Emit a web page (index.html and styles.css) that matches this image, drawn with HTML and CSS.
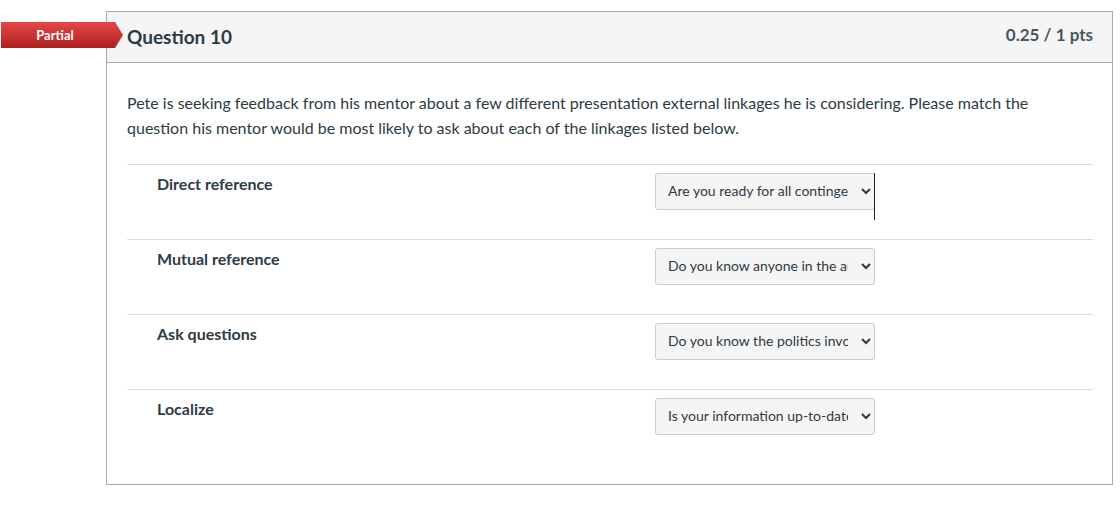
FILE: index.html
```html
<html>

<head>
    <title>Question 10</title>
    <link rel="stylesheet" href="styles.css">
</head>

<body>
    <main class="quiz">
        <div class="question">
            <div class="answer-badge">
                <span class="answer-badge-text">Partial</span>
                <svg class="answer-badge-tip" width="12" height="26" viewBox="0 0 12 26">
                    <defs>
                        <linearGradient id="tip-fill" x1="0" y1="0" x2="0" y2="1">
                            <stop offset="0" stop-color="#e34848"/>
                            <stop offset="1" stop-color="#b01f1f"/>
                        </linearGradient>
                    </defs>
                    <polygon points="0,0 4,0 12,13 4,26 0,26" fill="url(#tip-fill)"/>
                </svg>
            </div>

            <div class="question-header">
                <div class="question-title">Question 10</div>
                <div class="question-points">0.25 / 1 pts</div>
            </div>

            <div class="question-body">
                <p class="question-text">
                    Pete is seeking feedback from his mentor about a few different presentation external linkages he is considering. Please match the question his mentor would be most likely to ask about each of the linkages listed below.
                </p>

                <div class="match-row">
                    <div class="match-label">Direct reference</div>
                    <div class="match-select-wrap">
                        <select class="match-select">
                            <option>Are you ready for all contingencies?</option>
                        </select>
                        <span class="text-cursor"></span>
                    </div>
                </div>

                <div class="match-row">
                    <div class="match-label">Mutual reference</div>
                    <div class="match-select-wrap">
                        <select class="match-select">
                            <option>Do you know anyone in the audience?</option>
                        </select>
                    </div>
                </div>

                <div class="match-row">
                    <div class="match-label">Ask questions</div>
                    <div class="match-select-wrap">
                        <select class="match-select">
                            <option>Do you know the politics involved?</option>
                        </select>
                    </div>
                </div>

                <div class="match-row">
                    <div class="match-label">Localize</div>
                    <div class="match-select-wrap">
                        <select class="match-select">
                            <option>Is your information up-to-date?</option>
                        </select>
                    </div>
                </div>
            </div>
        </div>
    </main>
</body>

</html>
```

FILE: styles.css
```css
* {
    font-family: Lato, "Open Sans", sans-serif;
    box-sizing: border-box;
}

html, body {
    margin: 0;
    padding: 0;
    background: #fff;
    color: #2d3b45;
}

.quiz {
    padding: 11px 7px 0 106px;
}

.question {
    position: relative;
    border: 1px solid #aaaaaa;
}

.answer-badge {
    position: absolute;
    top: 10px;
    left: -106px;
    display: flex;
    height: 26px;
}

.answer-badge-text {
    width: 110px;
    height: 26px;
    display: flex;
    align-items: center;
    justify-content: center;
    padding-right: 2px;
    color: #fff;
    font-size: 13px;
    font-weight: bold;
    background: linear-gradient(#e34848, #b01f1f);
}

.answer-badge-tip {
    display: block;
}

.question-header {
    height: 51px;
    display: flex;
    justify-content: space-between;
    align-items: center;
    padding: 0 19px 0 20px;
    background: #f5f5f5;
    border-bottom: 1px solid #aaaaaa;
}

.question-title {
    font-size: 19px;
    font-weight: bold;
    margin-bottom: 2px;
}

.question-points {
    font-size: 17px;
    font-weight: bold;
    color: #4a555e;
    margin-bottom: 6px;
}

.question-body {
    padding: 27px 19px 20px 20px;
}

.question-text {
    margin: 0 0 24px 0;
    font-size: 16px;
    line-height: 25px;
}

.match-row {
    display: flex;
    height: 75px;
    padding: 8px 0 0 30px;
    border-top: 1px solid #dcdcdc;
}

.match-label {
    width: 498px;
    margin-top: 1px;
    font-size: 16px;
    line-height: 20px;
    font-weight: bold;
}

.match-select-wrap {
    position: relative;
}

.match-select {
    width: 220px;
    height: 37px;
    padding: 0 10px 2px 8px;
    font-size: 14px;
    color: #2d3b45;
    background: #f5f5f5;
    border: 1px solid #c7cdd1;
    border-radius: 3px;
}

.text-cursor {
    position: absolute;
    top: 0;
    left: 219px;
    width: 1px;
    height: 47px;
    background: #222;
}
```
